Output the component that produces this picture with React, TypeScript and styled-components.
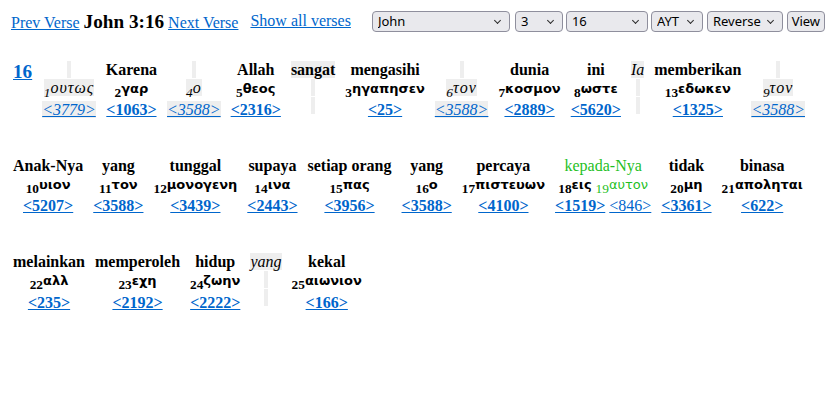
import React from "react";
import styled, { createGlobalStyle, css } from "styled-components";

const GlobalStyle = createGlobalStyle`
  body {
    margin: 8px;
    background: #ffffff;
    color: #000000;
    font-family: "Liberation Serif", "Times New Roman", serif;
    font-size: 16px;
  }
`;

const LINK = "#0066cc";
const GREEN = "#1fbf1f";
const GREY_BG = "#eeeeee";

const Header = styled.div`
  display: flex;
  align-items: flex-start;
  height: 25px;
  padding-left: 3px;
  white-space: nowrap;
`;

const NavGroup = styled.div`
  margin-top: 2.5px;
`;

const NavLink = styled.a`
  color: ${LINK};
  text-decoration: underline;
  font-size: 16px;
`;

const Ref = styled.b`
  font-size: 19.2px;
  margin: 0 4px;
`;

const ShowAll = styled.a`
  color: ${LINK};
  text-decoration: underline;
  margin-left: 12px;
  margin-top: 3.5px;
`;

const Form = styled.form`
  display: flex;
  margin: 3px 0 0 21px;
`;

const SelectBox = styled.span<{ $w: number; $ml: number }>`
  position: relative;
  display: inline-flex;
  width: ${(p) => p.$w}px;
  margin-left: ${(p) => p.$ml}px;
  &::after {
    content: "";
    position: absolute;
    right: 10px;
    top: 7px;
    width: 4px;
    height: 4px;
    border-right: 1.5px solid #2b2b2b;
    border-bottom: 1.5px solid #2b2b2b;
    transform: rotate(45deg);
    pointer-events: none;
  }
`;

const controlStyle = css`
  box-sizing: border-box;
  height: 21px;
  background: #e9e9ed;
  border: 1px solid #8f8f9d;
  border-radius: 4px;
  color: #000;
  font-family: "Noto Sans", "DejaVu Sans", sans-serif;
  font-size: 13px;
  line-height: 17px;
`;

const Select = styled.select`
  ${controlStyle};
  appearance: none;
  -webkit-appearance: none;
  width: 100%;
  padding: 0 20px 0 5px;
  margin: 0;
`;

const ViewButton = styled.button`
  ${controlStyle};
  width: 38px;
  margin-left: 4px;
  padding: 0;
`;

const Verse = styled.div`
  display: flex;
  flex-wrap: wrap;
  align-items: flex-start;
  column-gap: 10px;
  row-gap: 38px;
  margin-top: 28px;
  padding-left: 5px;
`;

const VerseNum = styled.a`
  color: ${LINK};
  font-weight: bold;
  font-size: 19.2px;
  text-decoration: underline;
`;

const WordBlock = styled.div`
  display: flex;
  flex-direction: column;
  align-items: center;
  text-align: center;
  white-space: nowrap;
`;

const Line = styled.div``;

type IndoVariant = "normal" | "missing" | "added" | "green";

const Indo = styled.span<{ $v: IndoVariant }>`
  font-weight: ${(p) => (p.$v === "added" || p.$v === "green" ? "normal" : "bold")};
  font-style: ${(p) => (p.$v === "added" ? "italic" : "normal")};
  color: ${(p) => (p.$v === "green" ? GREEN : "#000")};
  background: ${(p) => (p.$v === "missing" || p.$v === "added" ? GREY_BG : "transparent")};
`;

const Empty = styled.span`
  background: ${GREY_BG};
`;

type GreekVariant = "bold" | "untrans" | "green";

const GreekRun = styled.span<{ $v: GreekVariant }>`
  font-weight: ${(p) => (p.$v === "bold" ? "bold" : "normal")};
  font-style: ${(p) => (p.$v === "untrans" ? "italic" : "normal")};
  color: ${(p) => (p.$v === "green" ? GREEN : "#000")};
  background: ${(p) => (p.$v === "untrans" ? GREY_BG : "transparent")};
`;

const Sub = styled.sub`
  font-size: 13.33px;
`;

const GreekWord = styled.span<{ $v: GreekVariant }>`
  ${(p) =>
    p.$v === "untrans"
      ? css`
          font-family: "Liberation Serif", "Times New Roman", serif;
          font-size: 16px;
          letter-spacing: 1px;
        `
      : css`
          font-family: "DejaVu Sans", "Noto Sans", sans-serif;
          font-size: 13px;
        `}
`;

type StrongVariant = "bold" | "untrans" | "plain";

const Strong = styled.a<{ $v: StrongVariant }>`
  color: ${LINK};
  text-decoration: underline;
  font-weight: ${(p) => (p.$v === "bold" ? "bold" : "normal")};
  font-style: ${(p) => (p.$v === "untrans" ? "italic" : "normal")};
  background: ${(p) => (p.$v === "untrans" ? GREY_BG : "transparent")};
`;

type Greek = { n: number; t: string; v?: GreekVariant };
type StrongNum = { num: string; v?: StrongVariant };
type Word = {
  indo: { t: string; v?: IndoVariant } | null;
  greek: Greek[];
  strongs: StrongNum[];
};

const words: Word[] = [
  { indo: null, greek: [{ n: 1, t: "ουτως", v: "untrans" }], strongs: [{ num: "3779", v: "untrans" }] },
  { indo: { t: "Karena" }, greek: [{ n: 2, t: "γαρ" }], strongs: [{ num: "1063" }] },
  { indo: null, greek: [{ n: 4, t: "ο", v: "untrans" }], strongs: [{ num: "3588", v: "untrans" }] },
  { indo: { t: "Allah" }, greek: [{ n: 5, t: "θεος" }], strongs: [{ num: "2316" }] },
  { indo: { t: "sangat", v: "missing" }, greek: [], strongs: [] },
  { indo: { t: "mengasihi" }, greek: [{ n: 3, t: "ηγαπησεν" }], strongs: [{ num: "25" }] },
  { indo: null, greek: [{ n: 6, t: "τον", v: "untrans" }], strongs: [{ num: "3588", v: "untrans" }] },
  { indo: { t: "dunia" }, greek: [{ n: 7, t: "κοσμον" }], strongs: [{ num: "2889" }] },
  { indo: { t: "ini" }, greek: [{ n: 8, t: "ωστε" }], strongs: [{ num: "5620" }] },
  { indo: { t: "Ia", v: "added" }, greek: [], strongs: [] },
  { indo: { t: "memberikan" }, greek: [{ n: 13, t: "εδωκεν" }], strongs: [{ num: "1325" }] },
  { indo: null, greek: [{ n: 9, t: "τον", v: "untrans" }], strongs: [{ num: "3588", v: "untrans" }] },
  { indo: { t: "Anak-Nya" }, greek: [{ n: 10, t: "υιον" }], strongs: [{ num: "5207" }] },
  { indo: { t: "yang" }, greek: [{ n: 11, t: "τον" }], strongs: [{ num: "3588" }] },
  { indo: { t: "tunggal" }, greek: [{ n: 12, t: "μονογενη" }], strongs: [{ num: "3439" }] },
  { indo: { t: "supaya" }, greek: [{ n: 14, t: "ινα" }], strongs: [{ num: "2443" }] },
  { indo: { t: "setiap orang" }, greek: [{ n: 15, t: "πας" }], strongs: [{ num: "3956" }] },
  { indo: { t: "yang" }, greek: [{ n: 16, t: "ο" }], strongs: [{ num: "3588" }] },
  { indo: { t: "percaya" }, greek: [{ n: 17, t: "πιστευων" }], strongs: [{ num: "4100" }] },
  {
    indo: { t: "kepada-Nya", v: "green" },
    greek: [{ n: 18, t: "εις" }, { n: 19, t: "αυτον", v: "green" }],
    strongs: [{ num: "1519" }, { num: "846", v: "plain" }],
  },
  { indo: { t: "tidak" }, greek: [{ n: 20, t: "μη" }], strongs: [{ num: "3361" }] },
  { indo: { t: "binasa" }, greek: [{ n: 21, t: "αποληται" }], strongs: [{ num: "622" }] },
  { indo: { t: "melainkan" }, greek: [{ n: 22, t: "αλλ" }], strongs: [{ num: "235" }] },
  { indo: { t: "memperoleh" }, greek: [{ n: 23, t: "εχη" }], strongs: [{ num: "2192" }] },
  { indo: { t: "hidup" }, greek: [{ n: 24, t: "ζωην" }], strongs: [{ num: "2222" }] },
  { indo: { t: "yang", v: "added" }, greek: [], strongs: [] },
  { indo: { t: "kekal" }, greek: [{ n: 25, t: "αιωνιον" }], strongs: [{ num: "166" }] },
];

const NBSP = "\u00a0";

function WordView({ w }: { w: Word }) {
  return (
    <WordBlock>
      <Line>
        {w.indo ? <Indo $v={w.indo.v ?? "normal"}>{w.indo.t}</Indo> : <Empty>{NBSP}</Empty>}
      </Line>
      <Line>
        {w.greek.length === 0 ? (
          <Empty>{NBSP}</Empty>
        ) : (
          w.greek.map((g, i) => {
            const v = g.v ?? "bold";
            return (
              <React.Fragment key={i}>
                {i > 0 ? " " : null}
                <GreekRun $v={v}>
                  <Sub>{g.n}</Sub>
                  <GreekWord $v={v}>{g.t}</GreekWord>
                </GreekRun>
              </React.Fragment>
            );
          })
        )}
      </Line>
      <Line>
        {w.strongs.length === 0 ? (
          <Empty>{NBSP}</Empty>
        ) : (
          w.strongs.map((s, i) => (
            <React.Fragment key={i}>
              {i > 0 ? " " : null}
              <Strong href="#" $v={s.v ?? "bold"}>{`<${s.num}>`}</Strong>
            </React.Fragment>
          ))
        )}
      </Line>
    </WordBlock>
  );
}

export default function App() {
  return (
    <>
      <GlobalStyle />
      <Header>
        <NavGroup>
          <NavLink href="#">Prev Verse</NavLink>
          <Ref>John 3:16</Ref>
          <NavLink href="#">Next Verse</NavLink>
        </NavGroup>
        <ShowAll href="#">Show all verses</ShowAll>
        <Form onSubmit={(e) => e.preventDefault()}>
          <SelectBox $w={138} $ml={0}>
            <Select defaultValue="John">
              <option>John</option>
            </Select>
          </SelectBox>
          <SelectBox $w={48} $ml={5}>
            <Select defaultValue="3">
              <option>3</option>
            </Select>
          </SelectBox>
          <SelectBox $w={82} $ml={3}>
            <Select defaultValue="16">
              <option>16</option>
            </Select>
          </SelectBox>
          <SelectBox $w={52} $ml={3}>
            <Select defaultValue="AYT">
              <option>AYT</option>
            </Select>
          </SelectBox>
          <SelectBox $w={76} $ml={4}>
            <Select defaultValue="Reverse">
              <option>Reverse</option>
            </Select>
          </SelectBox>
          <ViewButton type="submit">View</ViewButton>
        </Form>
      </Header>
      <Verse>
        <VerseNum href="#">16</VerseNum>
        {words.map((w, i) => (
          <WordView key={i} w={w} />
        ))}
      </Verse>
    </>
  );
}
